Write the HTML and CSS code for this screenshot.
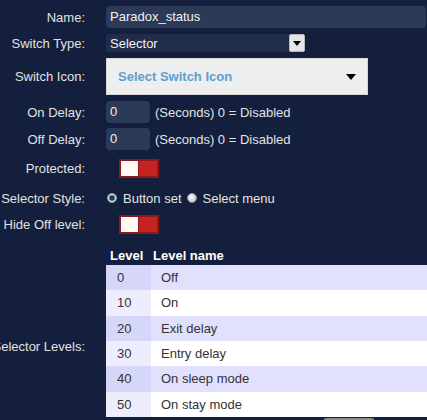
FILE: index.html
```html
<!DOCTYPE html>
<html>
<head>
<meta charset="utf-8">
<link rel="stylesheet" href="styles.css">
</head>
<body>
<div class="form">
  <div class="row r-name">
    <div class="label"><span>Name:</span></div>
    <div class="field"><div class="text-input wide">Paradox_status</div></div>
  </div>
  <div class="row r-type">
    <div class="label"><span>Switch Type:</span></div>
    <div class="field">
      <div class="select">
        <span class="select-text">Selector</span>
        <span class="select-btn"><svg width="8" height="5" viewBox="0 0 8 5"><path d="M0 0H8L4 5Z" fill="#000"/></svg></span>
      </div>
    </div>
  </div>
  <div class="row r-icon">
    <div class="label"><span>Switch Icon:</span></div>
    <div class="field">
      <div class="icon-select">
        <span class="icon-select-text">Select Switch Icon</span>
        <svg class="caret" width="10" height="6" viewBox="0 0 10 6"><path d="M0 0H10L5 6Z" fill="#000"/></svg>
      </div>
    </div>
  </div>
  <div class="row r-delay">
    <div class="label"><span>On Delay:</span></div>
    <div class="field"><div class="text-input small">0</div><span class="hint">(Seconds) 0 = Disabled</span></div>
  </div>
  <div class="row r-delay2">
    <div class="label"><span>Off Delay:</span></div>
    <div class="field"><div class="text-input small">0</div><span class="hint">(Seconds) 0 = Disabled</span></div>
  </div>
  <div class="row r-prot">
    <div class="label"><span>Protected:</span></div>
    <div class="field"><div class="toggle"><div class="knob"></div></div></div>
  </div>
  <div class="row r-style">
    <div class="label"><span>Selector Style:</span></div>
    <div class="field">
      <span class="radio on"></span><span class="radio-label">Button set</span>
      <span class="radio off"></span><span class="radio-label">Select menu</span>
    </div>
  </div>
  <div class="row r-hide">
    <div class="label"><span>Hide Off level:</span></div>
    <div class="field"><div class="toggle"><div class="knob"></div></div></div>
  </div>
  <div class="row r-levels">
    <div class="label levels-label"><span>Selector Levels:</span></div>
    <div class="field table-field">
      <table class="levels">
        <thead>
          <tr><th class="c-level">Level</th><th class="c-name">Level name</th></tr>
        </thead>
        <tbody>
          <tr class="odd"><td class="c-level">0</td><td class="c-name">Off</td></tr>
          <tr class="even"><td class="c-level">10</td><td class="c-name">On</td></tr>
          <tr class="odd"><td class="c-level">20</td><td class="c-name">Exit delay</td></tr>
          <tr class="even"><td class="c-level">30</td><td class="c-name">Entry delay</td></tr>
          <tr class="odd"><td class="c-level">40</td><td class="c-name">On sleep mode</td></tr>
          <tr class="even"><td class="c-level">50</td><td class="c-name">On stay mode</td></tr>
        </tbody>
      </table>
      <div class="bump"></div>
    </div>
  </div>
</div>
</body>
</html>
```
FILE: styles.css
```css
html, body {
  margin: 0;
  padding: 0;
  background: #131f3c;
  overflow: hidden;
}
body {
  font-family: "Liberation Sans", Arial, sans-serif;
  font-size: 13px;
  color: #e4e4e4;
  width: 427px;
  height: 420px;
}
.form {
  display: flex;
  flex-direction: column;
  padding-top: 6px;
}
.row {
  display: grid;
  grid-template-columns: 85px 1fr;
  column-gap: 21px;
  align-items: center;
}
.label {
  display: flex;
  justify-content: flex-end;
  white-space: nowrap;
  color: #e2e2e2;
}
.field {
  display: flex;
  align-items: center;
  white-space: nowrap;
  min-width: 0;
}
.r-name { height: 22px; }
.r-type { height: 18px; margin-top: 6px; }
.r-icon { height: 37px; margin-top: 6px; }
.r-delay { height: 22px; margin-top: 6px; }
.r-delay2 { height: 22px; margin-top: 5px; }
.r-prot { height: 27px; margin-top: 5px; }
.r-style { height: 24px; margin-top: 4px; }
.r-hide { height: 23px; margin-top: 3px; }
.r-levels { margin-top: 9px; align-items: start; }

.text-input {
  background: #2b3a56;
  color: #f0f0f0;
  border-radius: 4px;
  height: 22px;
  line-height: 22px;
  padding-left: 4px;
  box-sizing: border-box;
}
.text-input.wide { width: 320px; }
.text-input.small { width: 44px; }
.hint { margin-left: 5px; color: #e4e4e4; }

.select {
  display: flex;
  align-items: center;
  width: 199px;
  height: 18px;
  background: #1f2d4a;
  border-radius: 3px;
  box-sizing: border-box;
}
.select-text {
  flex: 1;
  padding-left: 4px;
  color: #f2f2f2;
}
.select-btn {
  width: 16px;
  height: 18px;
  background: #e6e6e6;
  border: 1px solid #b8b8b8;
  border-radius: 2px;
  box-sizing: border-box;
  display: flex;
  align-items: center;
  justify-content: center;
}

.icon-select {
  display: flex;
  align-items: center;
  width: 262px;
  height: 37px;
  background: #eeeeee;
  border: 1px solid #d6d6d6;
  box-sizing: border-box;
  padding: 0 11px 0 11px;
}
.icon-select-text {
  flex: 1;
  color: #5a9fd0;
  font-weight: bold;
  font-size: 13px;
}
.caret { display: block; }

.toggle {
  margin-left: 13px;
  width: 40px;
  height: 19px;
  background: #c52320;
  border: 2px solid #8e1a1c;
  box-sizing: border-box;
  padding: 0;
  display: flex;
  align-items: center;
}
.knob {
  width: 18px;
  height: 15px;
  background: #fffaf3;
  border-right: 1px solid #8e1a1c;
  box-sizing: border-box;
}

.radio {
  width: 10px;
  height: 10px;
  border-radius: 50%;
  box-sizing: border-box;
  display: inline-block;
  flex: none;
}
.radio.on {
  margin-left: 1px;
  background: radial-gradient(circle, #1b3a4a 0 2px, #4a8ea6 2.5px 3px, #d8dde0 3.5px);
  border: 1px solid #9aa4aa;
}
.radio.off {
  margin-left: 5px;
  background: radial-gradient(circle at 40% 35%, #ffffff 0, #d4d4d4 60%, #a9a9a9 100%);
  border: 1px solid #9a9a9a;
}
.radio-label { margin-left: 6px; color: #e4e4e4; }

.levels-label {
  padding-top: 94px;
}
.table-field {
  flex-direction: column;
  align-items: flex-start;
}
.levels {
  border-collapse: collapse;
  width: 321px;
  color: #333333;
}
.levels th {
  color: #ffffff;
  font-weight: bold;
  text-align: left;
  height: 20px;
  padding: 0 0 0 4px;
  vertical-align: middle;
}
.levels th.c-name { padding-left: 2px; }
.levels td {
  height: 25.33px;
  padding: 0 0 0 10px;
  vertical-align: middle;
}
.levels td.c-level { width: 34px; padding-left: 11px; }
.levels tr.odd td.c-name { background: #e1e1fe; }
.levels tr.odd td.c-level { background: #d6d6f8; }
.levels tr.even td.c-name { background: #ffffff; }
.levels tr.even td.c-level { background: #ededfe; }
.bump {
  margin-left: 217px;
  width: 52px;
  height: 4px;
  margin-top: 1px;
  background: #8a8a8a;
  border-radius: 8px 8px 0 0;
}
```
